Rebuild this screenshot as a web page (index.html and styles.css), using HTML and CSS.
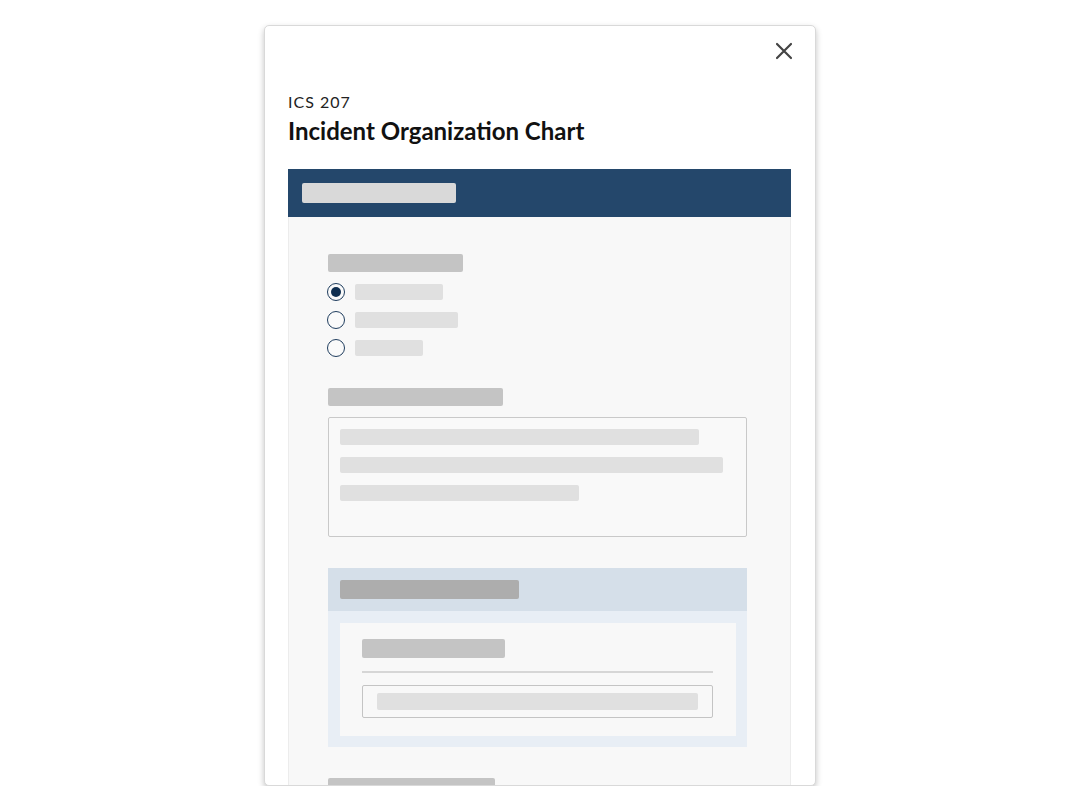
FILE: index.html
```html
<!DOCTYPE html>
<html lang="en">
<head>
<meta charset="utf-8">
<title>ICS 207 - Incident Organization Chart</title>
<link rel="stylesheet" href="styles.css">
</head>
<body>
<div class="card">
  <div class="close-row">
    <button class="close" aria-label="Close">
      <svg width="18" height="18" viewBox="0 0 18 18"><path d="M2 2L16 16M16 2L2 16" stroke="#444" stroke-width="2.2" stroke-linecap="round" fill="none"/></svg>
    </button>
  </div>
  <div class="subtitle">ICS 207</div>
  <h1 class="title">Incident Organization Chart</h1>

  <div class="form">
    <div class="form-head"><span class="sk sk-head"></span></div>
    <div class="form-body">
      <span class="sk sk-label w135"></span>
      <div class="radios">
        <div class="radio-row"><span class="radio checked"></span><span class="sk sk-opt w88"></span></div>
        <div class="radio-row"><span class="radio"></span><span class="sk sk-opt w103"></span></div>
        <div class="radio-row"><span class="radio"></span><span class="sk sk-opt w68"></span></div>
      </div>

      <span class="sk sk-label w175 mt31"></span>
      <div class="textarea">
        <span class="sk sk-line w359"></span>
        <span class="sk sk-line w383"></span>
        <span class="sk sk-line w239"></span>
      </div>

      <div class="section">
        <div class="section-head"><span class="sk sk-sechead"></span></div>
        <div class="section-body">
          <div class="inner">
            <span class="sk sk-label2"></span>
            <div class="divider"></div>
            <div class="input"><span class="sk sk-input"></span></div>
          </div>
        </div>
      </div>

      <span class="sk sk-label w167 mt31"></span>
    </div>
  </div>
</div>
</body>
</html>
```

FILE: styles.css
```css
html, body {
  margin: 0;
  padding: 0;
  background: #ffffff;
  font-family: Lato, "Open Sans", sans-serif;
}

.card {
  box-sizing: border-box;
  margin: 25px 0 0 264px;
  width: 552px;
  height: 761px;
  padding: 0 24px 0 23px;
  background: #ffffff;
  border: 1px solid #d9d9d9;
  border-radius: 5px;
  box-shadow: 0 3px 6px rgba(0, 0, 0, 0.24);
  overflow: hidden;
}

.close-row {
  display: flex;
  justify-content: flex-end;
  margin-top: 16px;
  height: 18px;
}

.close {
  display: flex;
  padding: 0;
  margin-right: -2px;
  border: 0;
  background: none;
  width: 18px;
  height: 18px;
}

.subtitle {
  margin-top: 32px;
  font-size: 16px;
  line-height: 20px;
  letter-spacing: 1px;
  color: #222;
}

.title {
  margin: 5px 0 0;
  font-size: 24px;
  line-height: 28px;
  font-weight: 700;
  color: #111;
}

.form {
  margin-top: 24px;
  background: #f8f8f8;
  border-left: 1px solid #ececec;
  border-right: 1px solid #ececec;
  height: 620px;
}

.form-head {
  margin: 0 -1px;
  height: 48px;
  background: #24476b;
  display: flex;
  align-items: center;
  padding-left: 14px;
}

.sk {
  display: block;
  border-radius: 2px;
}

.sk-head {
  width: 154px;
  height: 20px;
  background: #d9d9d9;
}

.form-body {
  padding: 37px 43px 0 39px;
}

.sk-label {
  height: 18px;
  background: #c4c4c4;
}

.w135 { width: 135px; }
.w175 { width: 175px; }
.w167 { width: 167px; }
.mt31 { margin-top: 31px; }

.radios {
  margin-top: 11px;
  display: flex;
  flex-direction: column;
  gap: 10px;
}

.radio-row {
  display: flex;
  align-items: center;
  gap: 10px;
  height: 18px;
}

.radio {
  box-sizing: border-box;
  width: 18px;
  height: 18px;
  margin-left: -1px;
  border-radius: 50%;
  border: 1.8px solid #1f3d5e;
  background: #fafafa;
  display: flex;
  align-items: center;
  justify-content: center;
}

.radio.checked::after {
  content: "";
  width: 10px;
  height: 10px;
  border-radius: 50%;
  background: #0f2e50;
}

.sk-opt {
  height: 16px;
  background: #e0e0e0;
}

.w88 { width: 88px; }
.w103 { width: 103px; }
.w68 { width: 68px; }

.textarea {
  box-sizing: border-box;
  margin-top: 11px;
  height: 120px;
  border: 1px solid #c9c9c9;
  border-radius: 2px;
  background: #f9f9f9;
  padding: 11px 11px 0;
  display: flex;
  flex-direction: column;
  gap: 12px;
}

.sk-line {
  height: 16px;
  background: #e0e0e0;
}

.w359 { width: 359px; }
.w383 { width: 383px; }
.w239 { width: 239px; }

.section {
  margin-top: 31px;
  background: #e8eef5;
}

.section-head {
  height: 43px;
  background: #d5dfe9;
  display: flex;
  align-items: center;
  padding-left: 12px;
}

.sk-sechead {
  width: 179px;
  height: 19px;
  background: #adadad;
}

.section-body {
  padding: 12px 11px 11px 12px;
}

.inner {
  background: #f8f8f8;
  padding: 16px 23px 18px 22px;
}

.sk-label2 {
  width: 143px;
  height: 19px;
  background: #c4c4c4;
}

.divider {
  margin-top: 13px;
  height: 2px;
  background: #d6d6d6;
}

.input {
  box-sizing: border-box;
  margin-top: 12px;
  height: 33px;
  border: 1px solid #c4c4c4;
  border-radius: 2px;
  padding: 7px 14px 0;
}

.sk-input {
  height: 17px;
  background: #e0e0e0;
}
```
